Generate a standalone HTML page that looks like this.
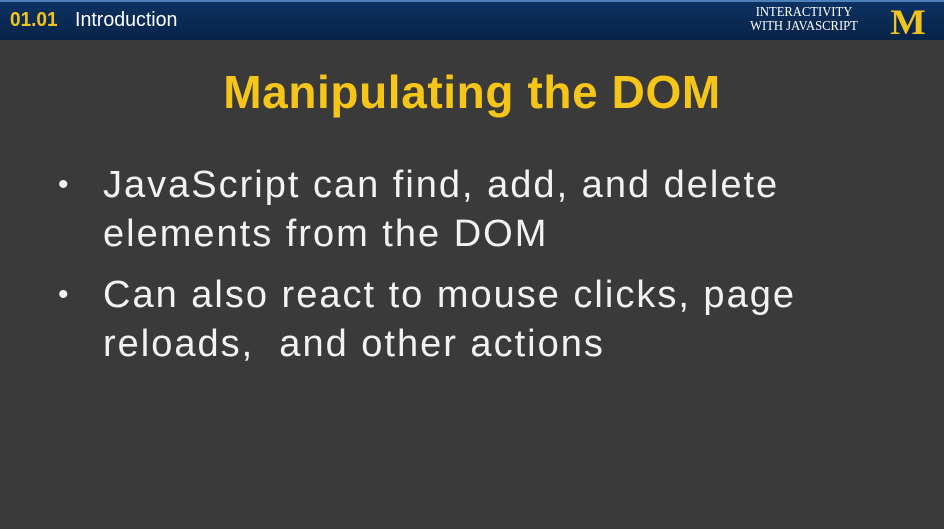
<!DOCTYPE html>
<html><head><meta charset="utf-8"><style>
html,body{margin:0;padding:0}
body{width:944px;height:529px;overflow:hidden;background:#3a3a3a;position:relative;font-family:"Liberation Sans",sans-serif}
.hdr{position:absolute;left:0;top:0;width:944px;height:40px;background:linear-gradient(#0d3262,#072348);border-top:2px solid #4d7fb8;box-sizing:border-box}
.num{position:absolute;left:10px;top:7px;color:#f3c41c;font-size:20px;font-weight:bold;transform:scaleX(0.95);transform-origin:left}
.intro{position:absolute;left:75px;top:7px;color:#fff;font-size:20px;transform:scaleX(0.98);transform-origin:left}
.course{position:absolute;left:730px;top:4px;width:148px;text-align:center;color:#fff;font-family:"Liberation Serif",serif;font-size:14px;line-height:14px;transform:scaleX(0.9)}
.m{position:absolute;left:891px;top:4px;color:#f3c41c;font-family:"Liberation Serif",serif;font-weight:bold;font-size:36px;line-height:32px;transform:scaleX(1.05)}
h1{position:absolute;left:0;width:944px;top:65px;margin:0;text-align:center;color:#f5c518;font-size:46px;font-weight:bold;letter-spacing:0.6px}
.b{position:absolute;left:103px;color:#f2f2f2;font-size:38px;line-height:49px;letter-spacing:2px}
.dot{position:absolute;left:58px;color:#f2f2f2;font-size:30px}
</style></head><body>
<div class="hdr">
<div class="num">01.01</div><div class="intro">Introduction</div>
<div class="course">INTERACTIVITY<br>WITH JAVASCRIPT</div>
<div class="m">M</div>
</div>
<h1>Manipulating the DOM</h1>
<div class="dot" style="top:168px">•</div>
<div class="b" style="top:161px">JavaScript can find, add, and delete<br>elements from the DOM</div>
<div class="dot" style="top:278px">•</div>
<div class="b" style="top:271px">Can also react to mouse clicks, page<br>reloads,&nbsp; and other actions</div>
</body></html>
